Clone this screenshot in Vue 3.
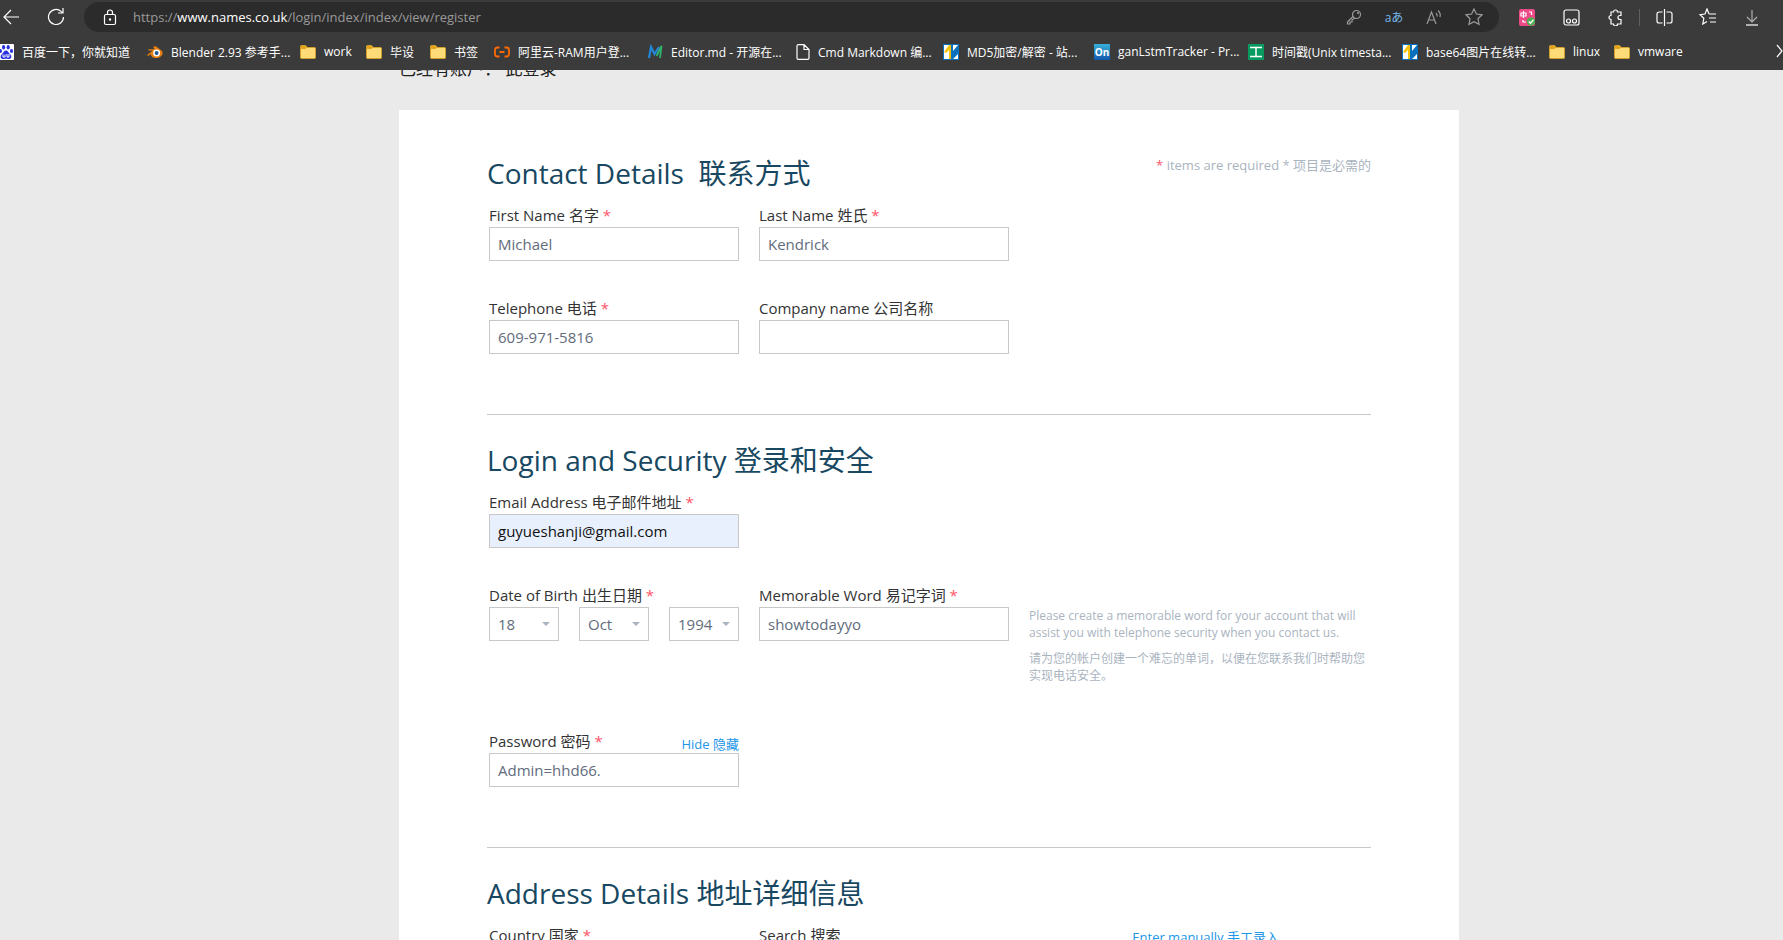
<script setup>
const bookmarks = [
  { icon: 'baidu', text: '百度一下，你就知道', w: 149 },
  { icon: 'blender', text: 'Blender 2.93 参考手...', w: 153 },
  { icon: 'folder', text: 'work', w: 66 },
  { icon: 'folder', text: '毕设', w: 64 },
  { icon: 'folder', text: '书签', w: 64 },
  { icon: 'aliyun', text: '阿里云-RAM用户登...', w: 153 },
  { icon: 'editor', text: 'Editor.md - 开源在...', w: 149 },
  { icon: 'page', text: 'Cmd Markdown 编...', w: 147 },
  { icon: 'chinaz', text: 'MD5加密/解密 - 站...', w: 151 },
  { icon: 'on', text: 'ganLstmTracker - Pr...', w: 154 },
  { icon: 'tool', text: '时间戳(Unix timesta...', w: 154 },
  { icon: 'chinaz', text: 'base64图片在线转...', w: 147 },
  { icon: 'folder', text: 'linux', w: 65 },
  { icon: 'folder', text: 'vmware', w: 80 },
]
</script>

<template>
  <div class="browser">
    <header class="chrome">
      <div class="toolbar">
        <button class="tool back" aria-label="Back">
          <svg width="18" height="18" viewBox="0 0 18 18"><path d="M17 9H2M9 2 2 9l7 7" /></svg>
        </button>
        <button class="tool reload" aria-label="Reload">
          <svg width="18" height="18" viewBox="0 0 18 18"><path d="M16.500 9A7.500 7.500 0 1 1 14 3.400L16 5M16 0v5h-5" /></svg>
        </button>
        <div class="address">
          <svg class="lock" width="14" height="17" viewBox="0 0 14 17"><rect x="1.500" y="5.500" width="11" height="10" rx="1.500" /><path d="M4.500 5.500V3.500a2.500 2.500 0 0 1 5 0v2" /><circle cx="7" cy="10.500" r=".6" /></svg>
          <a class="url" href="#"><span>https://</span><b>www.names.co.uk</b><span>/login/index/index/view/register</span></a>
          <button class="tool dim" aria-label="Saved passwords">
            <svg width="16" height="16" viewBox="0 0 16 16"><circle cx="10.500" cy="5.500" r="4" /><path d="M7 7.500 1.500 13v2H4v-2h2v-2l2.500-1.800" /><circle cx="12" cy="4" r=".5" /></svg>
          </button>
          <button class="tool translate" aria-label="Translate">aあ</button>
          <button class="tool dim" aria-label="Read aloud">
            <svg width="17" height="17" viewBox="0 0 17 17"><path d="M1 15 5.500 3 10 15M2.600 11h5.800M10 4q1.500 1.500 1 3.500M12 1.500q3 2.500 2 6.500" /></svg>
          </button>
          <button class="tool dim" aria-label="Add to favorites">
            <svg width="18" height="18" viewBox="0 0 18 18"><path d="m9 1 2.400 5 5.600.800-4 3.900 1 5.600-5-2.700-5 2.700 1-5.600L1 6.800 6.600 6z" /></svg>
          </button>
        </div>
        <div class="extensions">
          <button class="tool" aria-label="Immersive translate">
            <svg class="solid" width="16" height="17" viewBox="0 0 16 17"><rect width="16" height="17" rx="2" fill="#ec4a86" /><path d="M2 4h5v3H2zM4.500 2v7M10 3h2.500v3M4 11v2h3" fill="none" stroke="#fff" stroke-width="1.200" /><circle cx="12" cy="12.500" r="4.200" fill="#4caf50" /><path d="m9.800 12.500 1.700 1.700 3-3.400" fill="none" stroke="#fff" stroke-width="1.300" /></svg>
          </button>
          <button class="tool" aria-label="Tampermonkey">
            <svg width="17" height="17" viewBox="0 0 17 17"><rect x="1" y="1" width="15" height="15" rx="2" /><circle cx="5.500" cy="12" r="2" /><circle cx="11.500" cy="12" r="2" /></svg>
          </button>
          <button class="tool" aria-label="Extensions">
            <svg width="17" height="17" viewBox="0 0 17 17"><path d="M4 3h2.500a2 2 0 0 1 4 0H14v3.500h-1a2 2 0 0 0 0 4h1V15h-3.500a2 2 0 0 1-4 0H4v-4.500a2 2 0 0 1 0-4z" /></svg>
          </button>
          <i class="divider"></i>
          <button class="tool" aria-label="Split screen">
            <svg width="17" height="17" viewBox="0 0 17 17"><path d="M6.500 3H3a2 2 0 0 0-2 2v7a2 2 0 0 0 2 2h3.500M10.500 3H14a2 2 0 0 1 2 2v7a2 2 0 0 1-2 2h-3.500M8.500 0v17" /></svg>
          </button>
          <button class="tool" aria-label="Favorites">
            <svg width="18" height="18" viewBox="0 0 18 18"><path d="M10 6 8 1 6 6l-5 .700 3.800 3.600-1 5.700L8 13.500M10 6h7M10 10h7M11 14h6" /></svg>
          </button>
          <button class="tool" aria-label="Downloads">
            <svg width="14" height="17" viewBox="0 0 14 17"><path d="M7 1v12M2 8l5 5 5-5" stroke="#b0b0b0" /><path d="M1 16h12" /></svg>
          </button>
        </div>
      </div>
      <nav class="bookmarks" aria-label="Bookmarks">
        <a v-for="b in bookmarks" :key="b.text" href="#" class="bookmark" :style="{ width: b.w + 'px' }">
          <svg v-if="b.icon === 'folder'" width="16" height="16" viewBox="0 0 16 16"><path d="M.500 2.500a1 1 0 0 1 1-1h4L7.500 3.500h7a1 1 0 0 1 1 1v9a1 1 0 0 1-1 1h-13a1 1 0 0 1-1-1z" fill="#ffdb77" stroke="#d1a02a" /><path d="M1 2h4.500L7 3.500 5.500 5H1z" fill="#e0a31b" /></svg>
          <svg v-else-if="b.icon === 'baidu'" width="16" height="16" viewBox="0 0 16 16"><rect width="16" height="16" rx="1" fill="#fff" /><g fill="#2932e1"><ellipse cx="5.600" cy="3.200" rx="1.600" ry="2.200" /><ellipse cx="10.200" cy="3.200" rx="1.600" ry="2.200" /><ellipse cx="2.400" cy="7" rx="1.600" ry="2" /><ellipse cx="13.500" cy="7" rx="1.600" ry="2" /><path d="M8 6.500c2 0 2.500 2.200 4 3.500 3 3 .500 5.500-2 5-1.500-.300-2.500-.300-4 0-2.500.500-5-2-2-5C5.500 8.700 6 6.500 8 6.500z" /></g><path d="M5 10.500v2.500h2v-2.500M9 10v3h2v-3" fill="none" stroke="#fff" /></svg>
          <svg v-else-if="b.icon === 'blender'" width="16" height="16" viewBox="0 0 17 16"><path d="M9 1.500 16 7c2 4-2 7.500-6 7.500S4 12 4 10L1 12.500l-.800-1.200L6 6.500H1.500V5H8L6.500 2.800z" fill="#e87d0d" /><circle cx="10.200" cy="9" r="3.700" fill="#fff" /><circle cx="10.200" cy="9" r="2.100" fill="#265787" /></svg>
          <svg v-else-if="b.icon === 'aliyun'" width="16" height="16" viewBox="0 0 16 16"><path d="M5.500 3.500H3.500Q1 3.500 1 6v4q0 2.500 2.500 2.500h2M10.500 3.500h2Q15 3.500 15 6v4q0 2.500-2.500 2.500h-2M5.500 8h5" fill="none" stroke="#ff6a00" stroke-width="1.800" /></svg>
          <svg v-else-if="b.icon === 'editor'" width="16" height="16" viewBox="0 0 16 16"><path d="m2 14 2-11 3.500 7L12 3" fill="none" stroke="#2287d8" stroke-width="2.200" /><path d="M9.500 12 14.500 2l-1.500 12" fill="none" stroke="#2db36b" stroke-width="1.800" /></svg>
          <svg v-else-if="b.icon === 'page'" width="14" height="16" viewBox="0 0 14 16"><path d="M1 2a1.300 1.300 0 0 1 1.300-1.300H8L13 5.500V14a1.300 1.300 0 0 1-1.300 1.300H2.300A1.300 1.300 0 0 1 1 14zM8 1v4.500h5" fill="none" stroke="#fff" stroke-width="1.200" /></svg>
          <svg v-else-if="b.icon === 'chinaz'" width="16" height="16" viewBox="0 0 16 16"><path d="M0 0h16v16H0z" fill="#0a70bd" /><path d="M1 1h6v14H1zM10 1h5L10 7zM15 10v5h-5z" fill="#fff" /><path d="m1 8 5-7h2v14H6V6L3 9z" fill="#f7c20a" /></svg>
          <svg v-else-if="b.icon === 'on'" width="16" height="16" viewBox="0 0 16 16"><defs><linearGradient id="onFill" x2="0" y2="1"><stop stop-color="#38b0d8" /><stop offset="1" stop-color="#1258ac" /></linearGradient></defs><path d="M0 0h16v16H0z" fill="url(#onFill)" /><text x="8" y="12" text-anchor="middle" class="on">On</text></svg>
          <svg v-else width="16" height="16" viewBox="0 0 16 16"><path d="M0 0h16v16H0z" fill="#079b60" /><path d="M2 3.500h12M8 3.500v9M2 12.500h12" fill="none" stroke="#fff" stroke-width="1.500" /></svg>
          <span>{{ b.text }}</span>
        </a>
        <button class="more" aria-label="More bookmarks"><svg width="7" height="14" viewBox="0 0 7 14"><path d="m1 1 5 6-5 6" /></svg></button>
      </nav>
    </header>

    <main class="page">
      <div class="container">
        <p class="existing">已经有账户： <a href="#">此登录</a></p>
        <form class="card" @submit.prevent>
          <section>
            <div class="heading">
              <h2>Contact Details&nbsp; 联系方式</h2>
              <p class="required"><em>*</em> items are required * 项目是必需的</p>
            </div>
            <div class="row">
              <div class="field"><label for="first">First Name 名字 <em>*</em></label><input id="first" value="Michael" /></div>
              <div class="field"><label for="last">Last Name 姓氏 <em>*</em></label><input id="last" value="Kendrick" /></div>
            </div>
            <div class="row">
              <div class="field"><label for="tel">Telephone 电话 <em>*</em></label><input id="tel" type="tel" value="609-971-5816" /></div>
              <div class="field"><label for="company">Company name 公司名称</label><input id="company" /></div>
            </div>
          </section>
          <section>
            <div class="heading"><h2>Login and Security 登录和安全</h2></div>
            <div class="row">
              <div class="field"><label for="email">Email Address 电子邮件地址 <em>*</em></label><input id="email" class="filled" type="email" value="guyueshanji@gmail.com" /></div>
            </div>
            <div class="row">
              <div class="field">
                <label for="day">Date of Birth 出生日期 <em>*</em></label>
                <div class="dates">
                  <div class="select"><select id="day"><option>18</option></select></div>
                  <div class="select"><select aria-label="Month"><option>Oct</option></select></div>
                  <div class="select"><select aria-label="Year"><option>1994</option></select></div>
                </div>
              </div>
              <div class="field"><label for="word">Memorable Word 易记字词 <em>*</em></label><input id="word" value="showtodayyo" /></div>
              <div class="note">
                <p>Please create a memorable word for your account that will assist you with telephone security when you contact us.</p>
                <p>请为您的帐户创建一个难忘的单词，以便在您联系我们时帮助您实现电话安全。</p>
              </div>
            </div>
            <div class="row">
              <div class="field">
                <div class="label-line"><label for="password">Password 密码 <em>*</em></label><a href="#" class="link">Hide 隐藏</a></div>
                <input id="password" value="Admin=hhd66." />
              </div>
            </div>
          </section>
          <section>
            <div class="heading"><h2>Address Details 地址详细信息</h2></div>
            <div class="row">
              <div class="field"><label for="country">Country 国家 <em>*</em></label><input id="country" /></div>
              <div class="field"><label for="search">Search 搜索</label><input id="search" /></div>
              <div class="field manual"><a href="#" class="link">Enter manually 手工录入</a></div>
            </div>
          </section>
        </form>
      </div>
    </main>
  </div>
</template>

<style>
body { margin: 0; overflow: hidden; }
</style>

<style scoped>
* { box-sizing: border-box; }
.browser { height: 100vh; display: flex; flex-direction: column; overflow: hidden; font-family: "Open Sans", "Noto Sans CJK SC", sans-serif; background: #eaeaea; }
button { border: 0; padding: 0; background: none; color: inherit; font: inherit; }
a { color: inherit; text-decoration: none; }
p, h2 { margin: 0; }
em { color: #ff5468; font-style: normal; }
.chrome { flex: none; height: 70px; background: #3b3b3b; color: #fff; }
.toolbar { display: flex; align-items: center; height: 34px; padding: 0 23px 0 3px; }
.tool { flex: none; display: flex; align-items: center; justify-content: center; width: 16px; white-space: nowrap; }
.tool svg, .lock, .more svg { flex: none; fill: none; stroke: currentColor; stroke-width: 1.2; }
.tool svg.solid { stroke: none; }
.reload { margin-left: 29px; }
.address { flex: 1; display: flex; align-items: center; height: 30px; margin: 0 20px; padding: 0 17px 0 19px; gap: 24px; border-radius: 15px; background: #2b2b2b; }
.lock { margin-right: -8px; }
.url { flex: 1; font-size: 13px; color: #9a9a9a; white-space: nowrap; }
.url b { font-weight: 400; color: #fff; }
.dim { color: #9a9a9a; }
.translate { color: #75b5e8; font-size: 12px; }
.extensions { display: flex; align-items: center; gap: 28px; }
.divider { width: 1px; height: 17px; margin: 0 -12px; background: #606060; }
.bookmarks { display: flex; align-items: center; height: 35px; margin-left: -2px; white-space: nowrap; overflow: hidden; }
.bookmark { flex: none; display: flex; align-items: center; gap: 8px; font-size: 12px; }
.bookmark svg { flex: none; }
.on { font: 700 10px "Open Sans", sans-serif; fill: #fff; }
.more { margin-left: auto; }
.page { flex: 1; min-height: 0; padding-left: 75px; overflow: hidden; }
.container { max-width: 1060px; margin: 0 auto; }
.existing { height: 40px; margin-top: -13px; margin-bottom: 13px; font-size: 17px; line-height: 24px; color: #222; }
.card { padding: 40px 88px; background: #fff; }
section + section { margin-top: 60px; border-top: 1px solid #c8c8c8; padding-top: 22px; }
.heading { display: flex; justify-content: space-between; height: 54px; }
h2 { font-size: 28px; line-height: 46px; font-weight: 400; color: #184861; }
.required { font-size: 13px; line-height: 30px; color: #aab4c0; }
.row { display: flex; gap: 20px; padding-left: 2px; }
.row + .row { margin-top: 36px; }
.field { flex: none; width: 250px; }
label { display: block; font-size: 15px; line-height: 23px; color: #333; }
input, select { display: block; width: 100%; height: 34px; margin: 0; padding: 0 8px; border: 1px solid #c8c8c8; border-radius: 0; background: #fff; color: #626c7c; font: 15px "Open Sans", "Noto Sans CJK SC", sans-serif; }
.filled { background: #e8f0fe; color: #111; }
.dates { display: flex; gap: 20px; }
.select { position: relative; flex: 1; }
.select::after { content: ""; position: absolute; right: 9px; top: 15px; border: 4px solid transparent; border-top-color: #aab4c0; border-bottom: 0; pointer-events: none; }
select { appearance: none; }
.note { flex: 1; padding: 23px 0 10px; color: #aab4c0; font-size: 12px; line-height: 17px; }
.note p + p { margin-top: 9px; }
.link { font-size: 13px; color: #2196e8; }
.label-line { display: flex; justify-content: space-between; align-items: flex-end; }
.manual { text-align: right; line-height: 25px; }
</style>
